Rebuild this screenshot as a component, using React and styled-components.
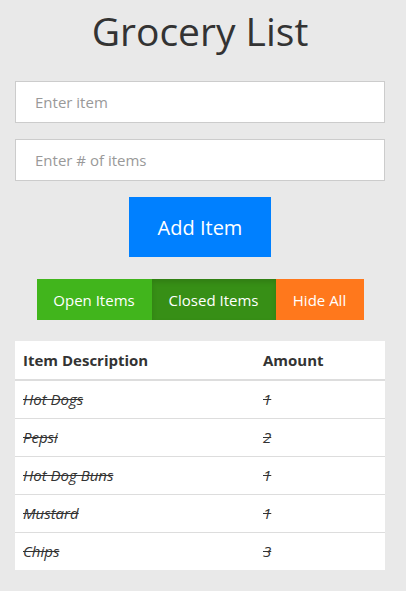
import React from "react";
import styled, { createGlobalStyle } from "styled-components";

const GlobalStyle = createGlobalStyle`
  * { box-sizing: border-box; }
  body {
    margin: 0;
    background: #e9e9e9;
    font-family: "Open Sans", "Liberation Sans", sans-serif;
    color: #333;
  }
`;

const items = [
  { name: "Hot Dogs", amount: 1 },
  { name: "Pepsi", amount: 2 },
  { name: "Hot Dog Buns", amount: 1 },
  { name: "Mustard", amount: 1 },
  { name: "Chips", amount: 3 },
];

const Page = styled.div`
  width: 406px;
  min-height: 591px;
  padding: 0 21px 0 15px;
  display: flex;
  flex-direction: column;
  align-items: center;
`;

const Title = styled.h1`
  margin: 6px 0 0;
  font-size: 39px;
  font-weight: 400;
  line-height: 50px;
  color: #333;
`;

const Input = styled.input`
  width: 100%;
  height: 42px;
  margin-top: ${({ $top }) => $top}px;
  padding: 0 19px;
  border: 1px solid #ccc;
  background: #fff;
  font-family: inherit;
  font-size: 15px;
  color: #333;
  outline: none;
  &::placeholder {
    color: #999;
  }
`;

const AddButton = styled.button`
  margin-top: 16px;
  width: 142px;
  height: 60px;
  border: none;
  background: #0080ff;
  color: #fff;
  font-family: inherit;
  font-size: 20px;
`;

const Group = styled.div`
  display: flex;
  margin-top: 22px;
`;

const GroupButton = styled.button`
  height: 41px;
  width: ${({ $w }) => $w}px;
  border: none;
  background: ${({ $bg }) => $bg};
  box-shadow: ${({ $active }) =>
    $active ? "inset 0 3px 5px rgba(0,0,0,0.125)" : "none"};
  color: #fff;
  font-family: inherit;
  font-size: 15px;
  padding: 0;
`;

const Table = styled.table`
  margin-top: 21px;
  width: 100%;
  border-collapse: collapse;
  background: #fff;
`;

const Th = styled.th`
  text-align: left;
  font-weight: 700;
  font-size: 15px;
  height: 39px;
  padding: 0 8px;
  border-bottom: 2px solid #ddd;
  width: ${({ $w }) => $w || "auto"};
`;

const Td = styled.td`
  height: 38px;
  padding: 0 8px;
  font-size: 15px;
  font-style: italic;
  text-decoration: line-through;
  border-top: 1px solid #ddd;
`;

const Row = styled.tr`
  &:first-child td {
    border-top: none;
  }
`;

export default function App() {
  return (
    <>
      <GlobalStyle />
      <Page>
        <Title>Grocery List</Title>
        <Input $top={25} placeholder="Enter item" />
        <Input $top={16} placeholder="Enter # of items" />
        <AddButton>Add Item</AddButton>
        <Group>
          <GroupButton $w={115} $bg="#41b51c">Open Items</GroupButton>
          <GroupButton $w={124} $bg="#378f16" $active>
            Closed Items
          </GroupButton>
          <GroupButton $w={88} $bg="#ff781c">Hide All</GroupButton>
        </Group>
        <Table>
          <thead>
            <tr>
              <Th $w="240px">Item Description</Th>
              <Th>Amount</Th>
            </tr>
          </thead>
          <tbody>
            {items.map((it, i) => (
              <Row key={i}>
                <Td>{it.name}</Td>
                <Td>{it.amount}</Td>
              </Row>
            ))}
          </tbody>
        </Table>
      </Page>
    </>
  );
}
